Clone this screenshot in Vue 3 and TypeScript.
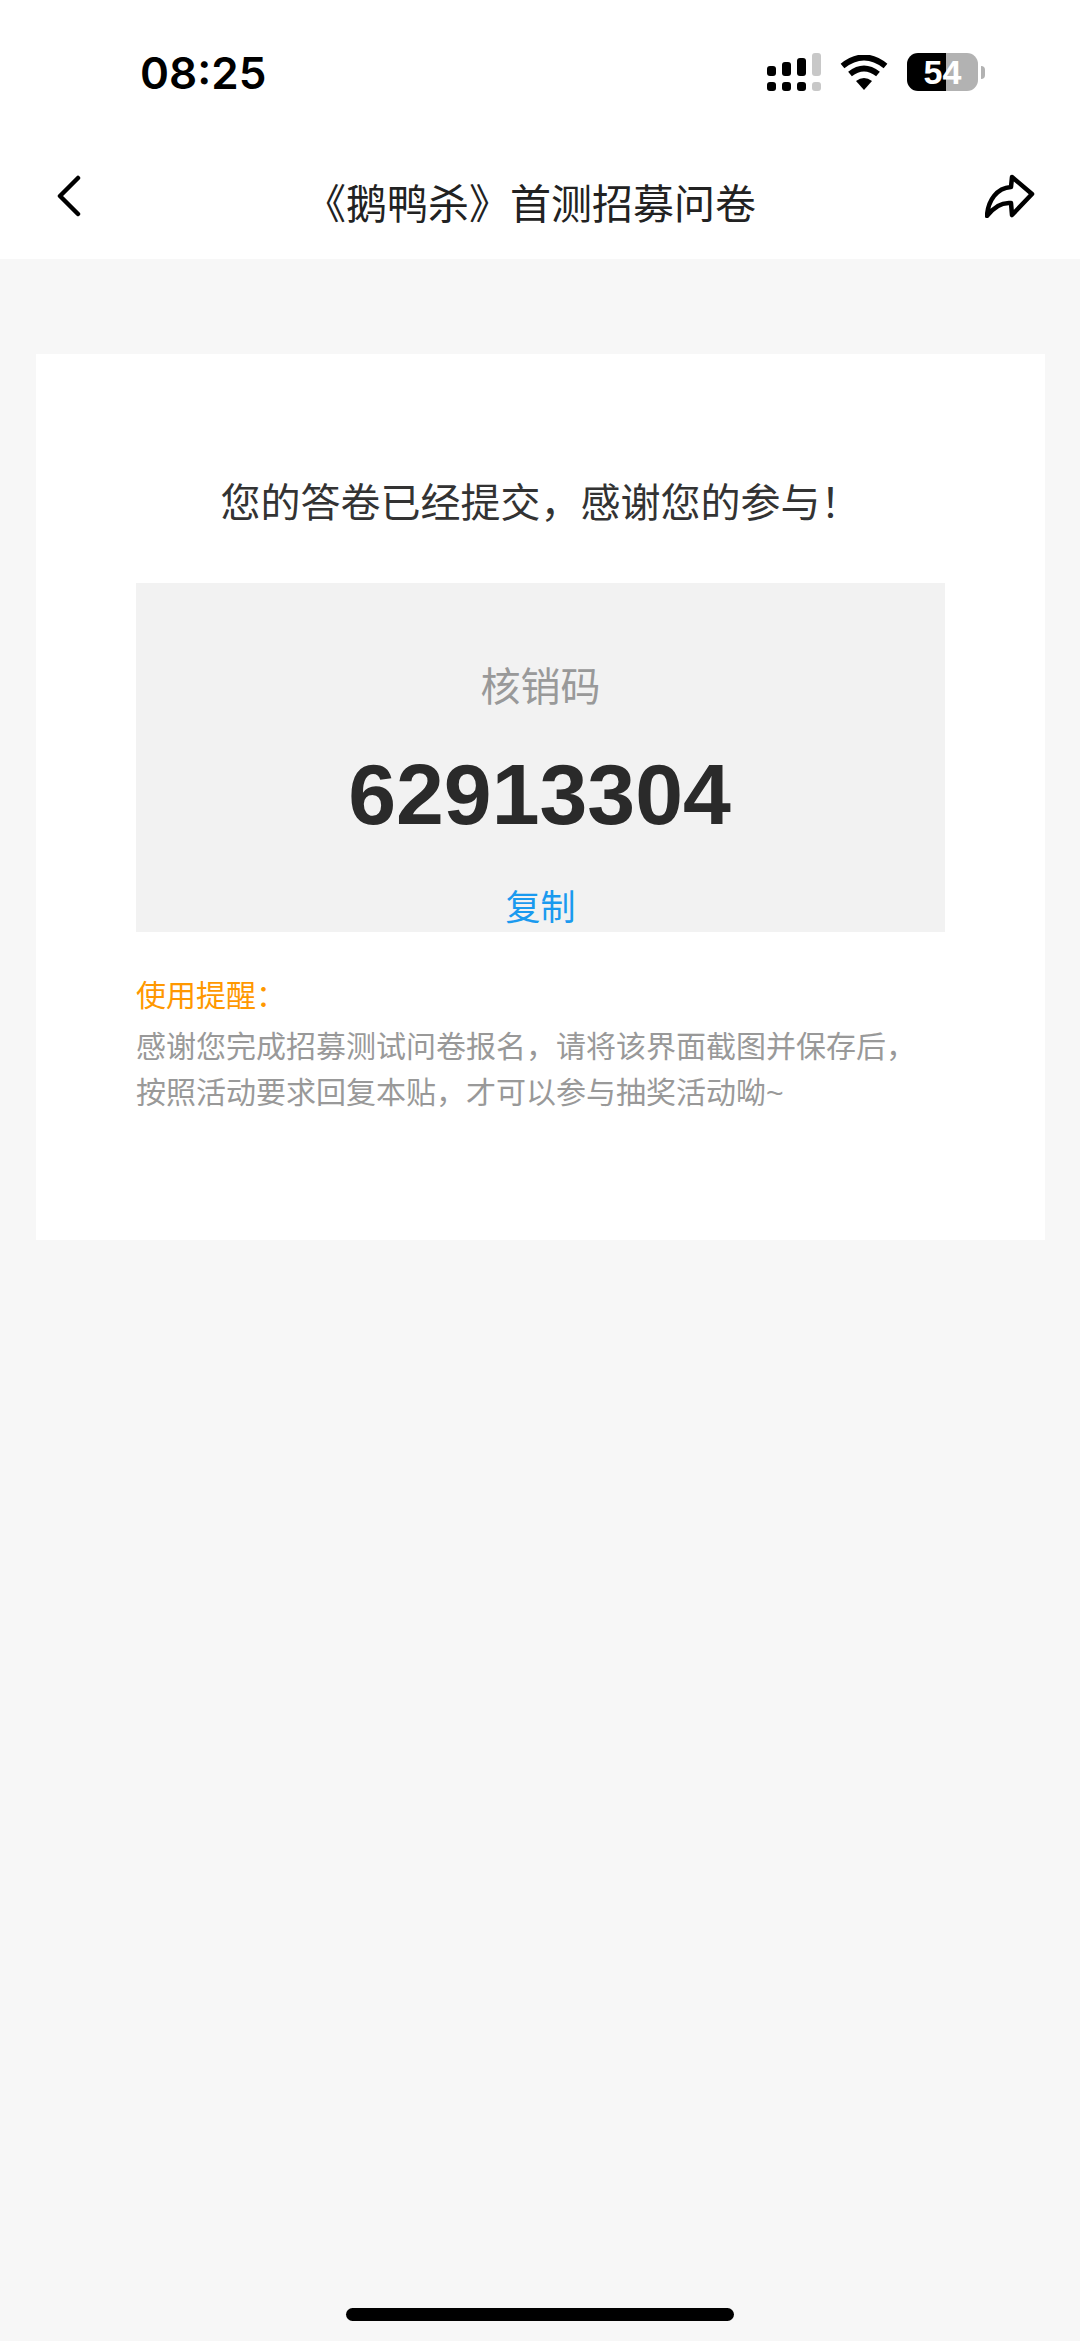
<script setup lang="ts">
const topBars = [10, 14, 18]
</script>

<template>
  <div class="page">
    <header class="status-bar">
      <span class="time">08:25</span>
      <div class="status-icons">
        <div class="signal">
          <div v-for="(h, i) in topBars" :key="i" class="signal-col">
            <i class="bar" :style="{ height: h + 'px' }"></i>
            <i class="dot"></i>
          </div>
          <div class="signal-col off">
            <i class="bar" style="height: 23px"></i>
            <i class="dot"></i>
          </div>
        </div>
        <svg class="wifi" width="48" height="35" viewBox="0 0 48 35">
          <path d="M24 35 L16 26 Q24 20 32 26 Z" fill="#000" />
          <path d="M10 19 Q24 8 38 19" fill="none" stroke="#000" stroke-width="6" />
          <path d="M2.5 11 Q24 -6 45.5 11" fill="none" stroke="#000" stroke-width="6" />
        </svg>
        <div class="battery">
          <div class="battery-body">54</div>
          <i class="battery-tip"></i>
        </div>
      </div>
    </header>

    <nav class="nav">
      <svg class="nav-icon" width="24" height="42" viewBox="0 0 24 42">
        <path d="M21 3 L3 21 L21 39" fill="none" stroke="#000" stroke-width="4.5" stroke-linecap="round" stroke-linejoin="round" />
      </svg>
      <h1 class="nav-title">《鹅鸭杀》首测招募问卷</h1>
      <svg class="nav-icon" width="50" height="44" viewBox="0 0 50 44">
        <path d="M27 3 L47 20 L27 41 L26 29 C16 28 8 34 2 42 C3 26 12 14 26 13 Z" fill="none" stroke="#000" stroke-width="4.5" stroke-linecap="round" stroke-linejoin="round" />
      </svg>
    </nav>

    <main class="content">
      <section class="card">
        <p class="done">您的答卷已经提交，感谢您的参与！</p>
        <div class="code-box">
          <p class="code-label">核销码</p>
          <p class="code">62913304</p>
          <p class="copy">复制</p>
        </div>
        <p class="tip-title">使用提醒：</p>
        <p class="tip-body">感谢您完成招募测试问卷报名，请将该界面截图并保存后，<br />按照活动要求回复本贴，才可以参与抽奖活动呦~</p>
      </section>
    </main>

    <div class="home-indicator"></div>
  </div>
</template>

<style>
html,
body {
  margin: 0;
  background: #f7f7f7;
}
</style>

<style scoped>
.page {
  position: relative;
  width: 1080px;
  height: 2341px;
  display: flex;
  flex-direction: column;
  background: #f7f7f7;
  overflow: hidden;
  font-family: "Liberation Sans", "Noto Sans CJK SC", sans-serif;
}

p,
h1 {
  margin: 0;
  font-weight: 400;
}

.status-bar {
  height: 144px;
  flex-shrink: 0;
  box-sizing: border-box;
  padding: 53px 95px 0 140px;
  background: #fff;
  display: flex;
  justify-content: space-between;
  align-items: flex-start;
}

.time {
  font-family: Inter, sans-serif;
  font-size: 44px;
  font-weight: 600;
  line-height: 40px;
  color: #000;
}

.status-icons {
  display: flex;
  align-items: flex-start;
  gap: 19px;
}

.signal {
  display: flex;
  align-items: flex-end;
  gap: 6px;
  height: 38px;
}

.signal-col {
  display: flex;
  flex-direction: column;
  gap: 6px;
}

.signal-col i {
  display: block;
  width: 9px;
  background: #000;
  border-radius: 3px;
}

.signal-col .dot {
  height: 9px;
}

.signal-col.off i {
  background: #c8c8c8;
}

.wifi {
  display: block;
  margin-top: 2px;
}

.battery {
  display: flex;
  align-items: center;
  gap: 3px;
}

.battery-body {
  width: 71px;
  height: 38px;
  border-radius: 11px;
  background: linear-gradient(90deg, #000 55%, #b2b2b2 55%);
  color: #fff;
  font-size: 34px;
  font-weight: 700;
  line-height: 38px;
  text-align: center;
}

.battery-tip {
  display: block;
  width: 4px;
  height: 13px;
  background: #b2b2b2;
  border-radius: 0 4px 4px 0;
}

.nav {
  height: 115px;
  flex-shrink: 0;
  box-sizing: border-box;
  padding: 0 45px 12px 57px;
  background: #fff;
  display: flex;
  align-items: center;
  justify-content: space-between;
}

.nav-title {
  font-size: 41px;
  line-height: 56px;
  color: #222;
  padding-top: 19px;
  margin-right: 5px;
}

.content {
  padding: 95px 35px 0 36px;
}

.card {
  height: 886px;
  box-sizing: border-box;
  background: #fff;
  padding: 121px 100px 0;
}

.done {
  font-size: 40px;
  line-height: 56px;
  color: #333;
  text-align: center;
}

.code-box {
  height: 349px;
  margin-top: 52px;
  background: #f2f2f2;
  display: flex;
  flex-direction: column;
  align-items: center;
}

.code-label {
  margin-top: 76px;
  font-size: 40px;
  line-height: 56px;
  color: #999;
}

.code {
  margin-top: 29px;
  margin-right: 2px;
  font-size: 86px;
  font-weight: 700;
  line-height: 100px;
  color: #2a2a2a;
}

.copy {
  margin-top: 40px;
  font-size: 35px;
  line-height: 48px;
  color: #1a9aef;
}

.tip-title {
  margin-top: 40px;
  font-size: 30px;
  line-height: 48px;
  color: #ff9800;
}

.tip-body {
  margin-top: 4px;
  font-size: 30px;
  line-height: 46px;
  color: #999;
  white-space: nowrap;
}

.home-indicator {
  position: absolute;
  left: 346px;
  bottom: 20px;
  width: 388px;
  height: 13px;
  border-radius: 7px;
  background: #000;
}
</style>
